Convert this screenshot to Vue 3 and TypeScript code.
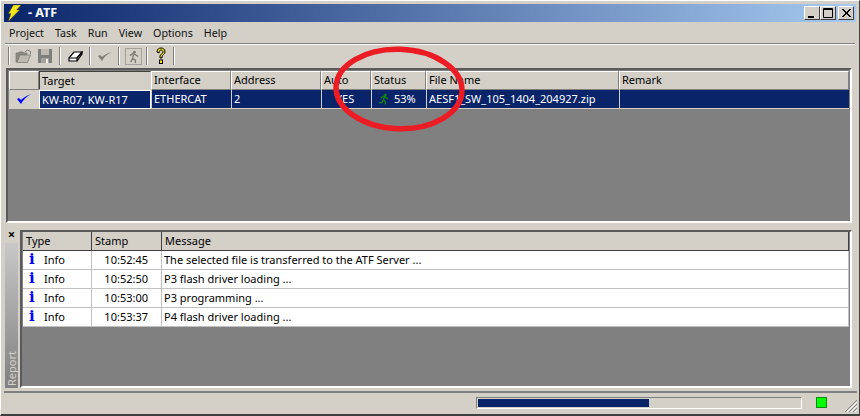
<script setup lang="ts">
const menus = ['Project', 'Task', 'Run', 'View', 'Options', 'Help']
const logs = [
  { time: '10:52:45', msg: 'The selected file is transferred to the ATF Server ...' },
  { time: '10:52:50', msg: 'P3 flash driver loading ...' },
  { time: '10:53:00', msg: 'P3 programming ...' },
  { time: '10:53:37', msg: 'P4 flash driver loading ...' },
]
const progress = 53
</script>

<template>
  <div class="window">
    <div class="titlebar">
      <svg class="logo" width="13" height="16" viewBox="0 0 13 16">
        <path d="M5.500 0 L13 0 L8.500 5 L11.500 5 L0.500 16 L3 8.500 L0.500 8.500 Z" fill="#f5e61a" stroke="#7a6a10" stroke-width=".4" />
      </svg>
      <span class="title">- ATF</span>
      <div class="caption">
        <span class="capbtn"><svg width="14" height="12" viewBox="0 0 14 12"><rect x="3" y="9" width="6" height="2" fill="#000" /></svg></span>
        <span class="capbtn"><svg width="14" height="12" viewBox="0 0 14 12"><path d="M2.500 1.500h9v9h-9z M2 2.500h10" fill="none" stroke="#000" /></svg></span>
        <span class="capbtn gap"><svg width="14" height="12" viewBox="0 0 14 12"><path d="M3 2l8 8M4 2l8 8M11 2l-8 8M12 2l-8 8" stroke="#000" fill="none" /></svg></span>
      </div>
    </div>
    <div class="menubar">
      <span v-for="m in menus" :key="m" class="menu">{{ m }}</span>
    </div>
    <div class="toolbar">
      <span class="grip"></span>
      <span class="tool">
        <svg width="17" height="15" viewBox="0 0 17 15"><path d="M1 13V4h2l1-1h4l1 1h3v2H5l-3 7z" fill="#8a8780" stroke="#807d76" stroke-width=".8" /><path d="M2 13.500h10.500l3-7.500H5z" fill="#bdb9b1" stroke="#807d76" stroke-width=".8" /><path d="M10 3l2.500-2 3 1.500V5" fill="none" stroke="#807d76" /></svg>
      </span>
      <span class="tool">
        <svg width="16" height="16" viewBox="0 0 16 16"><path d="M1 1h14v14H1z" fill="#7f7f7f" /><rect x="4" y="1" width="8" height="6" fill="#bdb9b1" /><rect x="4" y="10" width="8" height="5" fill="#a5a29b" /><rect x="9" y="11" width="2" height="4" fill="#f2f0ea" /></svg>
      </span>
      <span class="sep"></span>
      <span class="tool">
        <svg width="15" height="11" viewBox="0 0 15 11"><path d="M1 7 L6 1 H14 L9 7 V10 H1 Z" fill="#fff" stroke="#000" stroke-width="1.200" /><path d="M1 7 H9 L14 1 V3 L9 10" fill="none" stroke="#000" stroke-width="1.200" /></svg>
      </span>
      <span class="sep"></span>
      <span class="tool w21">
        <svg width="16" height="14" viewBox="0 0 16 14"><path d="M1 7 L5 12 C7 8 10 5 15 3 C10 4 7 6 5 8 L3 6 Z" fill="#807d76" /></svg>
      </span>
      <span class="sep"></span>
      <span class="tool boxed w20">
        <svg width="14" height="14" viewBox="0 0 14 14"><circle cx="8" cy="2.500" r="1.600" fill="#807d76" /><path d="M3 6l3-2 3 1 3 2M7 5l-1 4 3 2v3M6 9l-2 4" fill="none" stroke="#807d76" stroke-width="1.500" /></svg>
      </span>
      <span class="sep"></span>
      <span class="tool w19">
        <svg width="12" height="18" viewBox="0 0 12 18"><path d="M2 5C2 2 4 1 6 1s4 1 4 4c0 2-3 3-3 5v1H5V9c0-2 3-2 3-4 0-1-1-2-2-2S4 4 4 6Z" fill="#f5e61a" stroke="#000" /><rect x="4.500" y="13" width="3" height="3.500" fill="#f5e61a" stroke="#000" /></svg>
      </span>
      <span class="sep"></span>
    </div>

    <div class="panel upper">
      <div class="grid ugrid head">
        <div class="cell hd"></div>
        <div class="cell hd target">Target</div>
        <div class="cell hd">Interface</div>
        <div class="cell hd">Address</div>
        <div class="cell hd">Auto</div>
        <div class="cell hd">Status</div>
        <div class="cell hd">File Name</div>
        <div class="cell hd">Remark</div>
      </div>
      <div class="grid ugrid row">
        <div class="cell sel check">
          <svg width="14" height="12" viewBox="0 0 14 12"><path d="M0 6 L4 11 C6 7 9 4 14 1 C9 3 6 5 4 7 L2 5 Z" fill="#0000ff" /></svg>
        </div>
        <div class="cell sel focus">KW-R07, KW-R17</div>
        <div class="cell sel">ETHERCAT</div>
        <div class="cell sel">2</div>
        <div class="cell sel center">YES</div>
        <div class="cell sel status">
          <svg width="13" height="12" viewBox="0 0 14 12"><circle cx="9" cy="1.800" r="1.500" fill="#0c8a0c" /><path d="M4 5l3-2 2 1 3 2M8 4l-1 3 2 2v3M7 7l-2 3-3 0" fill="none" stroke="#0c8a0c" stroke-width="1.400" /></svg>
          <span>53%</span>
        </div>
        <div class="cell sel">AESF1_SW_105_1404_204927.zip</div>
        <div class="cell sel"></div>
      </div>
    </div>

    <div class="lower-wrap">
      <div class="side">
        <span class="close">×</span>
        <div class="tab"><span>Report</span></div>
      </div>
      <div class="panel lower">
        <div class="grid lgrid head">
          <div class="cell lhd">Type</div>
          <div class="cell lhd">Stamp</div>
          <div class="cell lhd">Message</div>
        </div>
        <div v-for="l in logs" :key="l.time" class="grid lgrid lrow">
          <div class="cell lc type"><b class="info">i</b><span>Info</span></div>
          <div class="cell lc time">{{ l.time }}</div>
          <div class="cell lc">{{ l.msg }}</div>
        </div>
      </div>
    </div>

    <div class="statusbar">
      <div class="progress"><div class="bar" :style="{ width: progress + '%' }"></div></div>
      <span class="led"></span>
      <svg class="resize" width="12" height="12" viewBox="0 0 12 12"><path d="M12 0L0 12M12 4L4 12M12 8L8 12" stroke="#808080" fill="none" /><path d="M12 2L2 12M12 6L6 12M12 10L10 12" stroke="#fff" fill="none" /></svg>
    </div>

    <svg class="ring" width="140" height="96" viewBox="0 0 140 96">
      <ellipse cx="70" cy="48" rx="63" ry="39.700" transform="rotate(2 70 48)" fill="none" stroke="#ec1c24" stroke-width="5.500" />
    </svg>
  </div>
</template>

<style>
html, body { margin: 0; background: #d4d0c8; }
</style>

<style scoped>
.window {
  position: relative;
  box-sizing: border-box;
  width: 860px;
  height: 416px;
  overflow: hidden;
  display: flex;
  flex-direction: column;
  padding: 3px 4px 2px;
  background: #d4d0c8;
  border-right: 1px solid #404040;
  border-bottom: 2px solid #404040;
  border-left: 1px solid #fff;
  border-top: 1px solid #fff;
  font: 11px "Noto Sans", Tahoma, sans-serif;
  color: #000;
}
.titlebar {
  height: 18px;
  flex: none;
  display: flex;
  align-items: center;
  background: linear-gradient(90deg, #0a246a, #a6caf0);
  color: #fff;
  padding-left: 4px;
  margin: 0 -1px;
}
.title { margin-left: 7px; font-weight: 700; font-size: 12.500px; padding-bottom: 1px; }
.caption { margin-left: auto; display: flex; padding-right: 2px; }
.capbtn {
  box-sizing: border-box;
  width: 16px;
  height: 14px;
  background: #d4d0c8;
  border: 1px solid;
  border-color: #fff #404040 #404040 #fff;
  display: flex;
  align-items: center;
  justify-content: center;
}
.gap { margin-left: 2px; }
.menubar {
  height: 19px;
  flex: none;
  display: flex;
  align-items: center;
  margin-top: 1px;
  padding-left: 4px;
  gap: 11px;
  font-size: 10.700px;
  color: #111;
}
.toolbar {
  box-sizing: border-box;
  height: 25px;
  flex: none;
  display: flex;
  align-items: center;
  margin-top: 1px;
  border-top: 1px solid #808080;
  box-shadow: inset 0 1px 0 #fff;
  padding-left: 3px;
}
.grip { width: 0; height: 18px; border-left: 1px solid #808080; border-right: 1px solid #fff; margin-right: 2px; }
.tool { width: 22px; height: 20px; display: flex; align-items: center; justify-content: center; }
.w21 { width: 21px; }
.w20 { width: 20px; }
.w19 { width: 19px; }
.boxed svg { box-sizing: border-box; border: 1px solid #a5a29b; width: 17px; height: 17px; padding: 1px; }
.sep { width: 0; height: 18px; border-left: 1px solid #808080; border-right: 1px solid #fff; margin: 0 3px; }
.panel {
  box-sizing: border-box;
  background: #808080;
  border: 2px solid;
  border-color: #5a5a5a #fff #fff #5a5a5a;
}
.upper { height: 155px; flex: none; margin: 0 3px 0 1px; padding: 1px; }
.grid { display: grid; }
.ugrid { grid-template-columns: 30px 112px 80px 90px 50px 55px 193px 1fr; }
.cell { box-sizing: border-box; padding: 0 2px 1px; white-space: nowrap; overflow: hidden; display: flex; align-items: center; }
.head { height: 19px; }
.hd {
  background: #d4d0c8;
  border: 1px solid;
  border-color: #fff #808080 #808080 #fff;
  padding-bottom: 2px;
}
.target { border-color: #404040 #d4d0c8 #d4d0c8 #404040; padding-bottom: 0; }
.row { height: 19px; }
.sel { background: #0a246a; color: #fff; border-left: 1px solid #d4d0c8; border-bottom: 1px solid #d4d0c8; padding-left: 2px; }
.check { justify-content: center; padding-right: 4px; background: #d4d0c8; }
.focus { border: 1px solid #fff; }
.center { justify-content: center; padding-right: 5px; }
.status { gap: 4px; padding-left: 5px; }
.lower-wrap { flex: none; display: flex; margin-top: 7px; height: 158px; }
.side { width: 13px; flex: none; display: flex; flex-direction: column; margin: 0 2px 0 0; }
.close { height: 13px; font-size: 13px; font-weight: 700; line-height: 8px; text-align: center; }
.tab {
  flex: 1;
  background: linear-gradient(180deg, #c8c8c8, #808080);
  color: #d4d0c8;
  display: flex;
  align-items: flex-end;
  justify-content: center;
}
.tab span { writing-mode: vertical-rl; transform: rotate(180deg); padding-top: 2px; }
.lower { flex: 1; margin-right: 3px; padding: 0 1px; }
.lgrid { grid-template-columns: 69px 70px 1fr; }
.lhd { background: #d4d0c8; border-right: 1px solid #404040; border-bottom: 1px solid #404040; padding: 0 2px 2px 3px; }
.lrow { height: 19px; }
.lc { background: #fff; border-right: 1px solid #c0c0c0; border-bottom: 1px solid #c0c0c0; }
.type { padding-left: 6px; gap: 10px; }
.info { color: #0000ff; font: 700 15px/1 "DejaVu Serif", serif; width: 5px; }
.time { justify-content: flex-end; padding-right: 13px; }
.statusbar {
  box-sizing: border-box;
  flex: 1;
  display: flex;
  align-items: center;
  border-top: 2px solid #808080;
  margin: 3px -2px 0 -1px;
  padding-left: 472px;
  position: relative;
}
.progress {
  box-sizing: border-box;
  width: 326px;
  height: 12px;
  border: 1px solid;
  border-color: #808080 #fff #fff #808080;
  padding: 1px;
}
.bar { height: 100%; background: #0a246a; }
.led { box-sizing: border-box; width: 11px; height: 11px; margin-left: 14px; background: #00ff00; border: 1px solid #0a8a0a; }
.resize { position: absolute; right: 0; bottom: 0; }
.ring { position: absolute; left: 328px; top: 40px; pointer-events: none; }
</style>
